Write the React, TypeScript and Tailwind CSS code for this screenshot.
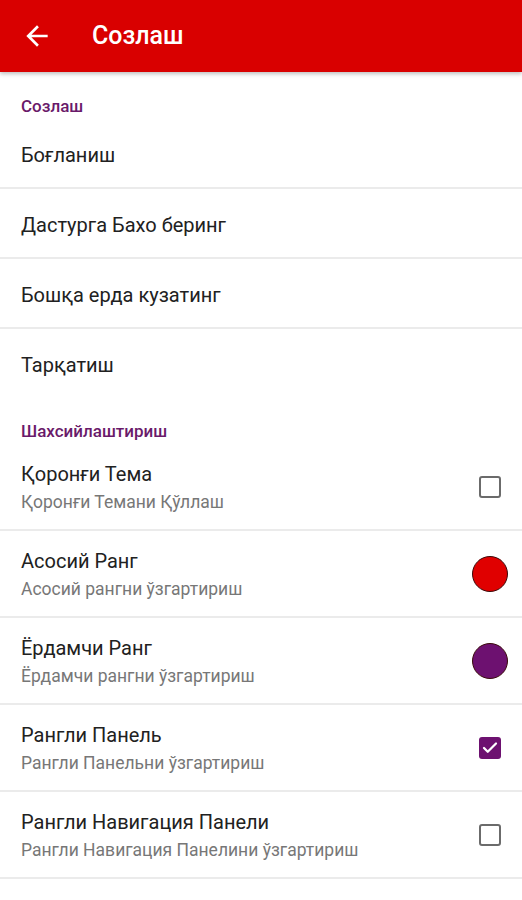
import { Check } from "lucide-react";

type Pref =
    | { kind: "plain"; title: string }
    | { kind: "check"; title: string; summary: string; checked: boolean }
    | { kind: "color"; title: string; summary: string; color: string };

const GENERAL: Pref[] = [
    { kind: "plain", title: "Боғланиш" },
    { kind: "plain", title: "Дастурга Бахо беринг" },
    { kind: "plain", title: "Бошқа ерда кузатинг" },
    { kind: "plain", title: "Тарқатиш" },
];

const PERSONAL: Pref[] = [
    { kind: "check", title: "Қоронғи Тема", summary: "Қоронғи Темани Қўллаш", checked: false },
    { kind: "color", title: "Асосий Ранг", summary: "Асосий рангни ўзгартириш", color: "#e00000" },
    { kind: "color", title: "Ёрдамчи Ранг", summary: "Ёрдамчи рангни ўзгартириш", color: "#6d1170" },
    { kind: "check", title: "Рангли Панель", summary: "Рангли Панельни ўзгартириш", checked: true },
    { kind: "check", title: "Рангли Навигация Панели", summary: "Рангли Навигация Панелини ўзгартириш", checked: false },
];

function CheckBox({ checked }: { checked: boolean }) {
    if (checked) {
        return (
            <div className="w-[22px] h-[22px] rounded-[3px] bg-[#6d1170] flex items-center justify-center">
                <Check className="w-[18px] h-[18px] text-white" strokeWidth={3} />
            </div>
        );
    }
    return <div className="w-[22px] h-[22px] rounded-[3px] border-2 border-[#6b6b6b]" />;
}

function Row({ pref, divider }: { pref: Pref; divider: boolean }) {
    return (
        <div className={divider ? "border-b-2 border-[#ebebeb]" : ""}>
            {pref.kind === "plain" ? (
                <div className="h-[68px] flex items-center px-[21px] pt-[3px]">
                    <span className="text-[20px] leading-6 text-[#212121]">{pref.title}</span>
                </div>
            ) : (
                <div className="h-[85px] flex items-center pl-[21px] pr-[14px]">
                    <div className="flex-1 flex flex-col">
                        <span className="text-[20px] leading-6 text-[#212121]">{pref.title}</span>
                        <span className="mt-1.5 text-[17.5px] leading-5 text-[#777777]">{pref.summary}</span>
                    </div>
                    {pref.kind === "check" ? (
                        <div className="w-9 flex justify-center">
                            <CheckBox checked={pref.checked} />
                        </div>
                    ) : (
                        <div
                            className="w-9 h-9 rounded-full border border-[#3a0a0a]"
                            style={{ backgroundColor: pref.color }}
                        />
                    )}
                </div>
            )}
        </div>
    );
}

function Category({ title, items }: { title: string; items: Pref[] }) {
    return (
        <div>
            <div className="px-[21px] pt-6 pb-[3px] text-[17px] leading-5 font-medium text-[#6a1a6a]">{title}</div>
            {items.map((p, i) => (
                <Row key={p.title} pref={p} divider={i < items.length - 1} />
            ))}
        </div>
    );
}

export default function App() {
    return (
        <div className="min-h-screen bg-white font-['Roboto',sans-serif] overflow-hidden">
            {/* Toolbar */}
            <div className="h-[72px] bg-[#d90000] flex items-center shadow-[0_2px_4px_rgba(0,0,0,0.25)] relative z-10">
                <svg viewBox="0 0 24 24" className="ml-[21px] w-8 h-8 fill-white">
                    <path d="M20 11H7.83l5.59-5.59L12 4l-8 8 8 8 1.41-1.41L7.83 13H20v-2z" />
                </svg>
                <h1 className="ml-[39px] text-[25px] font-medium text-white">Созлаш</h1>
            </div>

            <Category title="Созлаш" items={GENERAL} />
            <Category title="Шахсийлаштириш" items={PERSONAL} />
            <div className="border-b-2 border-[#ebebeb]" />
        </div>
    );
}
